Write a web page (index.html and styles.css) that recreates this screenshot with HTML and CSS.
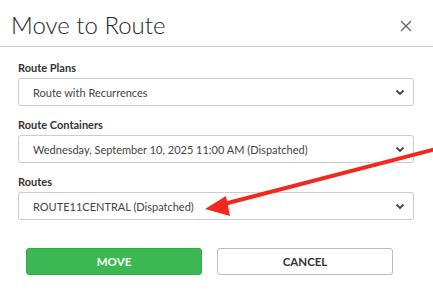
FILE: index.html
```html
<!DOCTYPE html>
<html>
<head>
<meta charset="utf-8">
<link rel="stylesheet" href="styles.css">
</head>
<body>
<div class="modal">
  <div class="header">
    <h1 class="title">Move to Route</h1>
    <span class="close">
      <svg width="12" height="12" viewBox="0 0 12 12"><path d="M1 1L11 11M11 1L1 11" stroke="#666" stroke-width="1.4" fill="none"/></svg>
    </span>
  </div>
  <div class="body">
    <div class="field">
      <label class="label">Route Plans</label>
      <div class="select"><span>Route with Recurrences</span><svg class="chev" width="10" height="7" viewBox="0 0 10 7"><path d="M1.5 1.5L5 5L8.5 1.5" stroke="#444" stroke-width="1.8" fill="none"/></svg></div>
    </div>
    <div class="field">
      <label class="label">Route Containers</label>
      <div class="select"><span>Wednesday, September 10, 2025 11:00 AM (Dispatched)</span><svg class="chev" width="10" height="7" viewBox="0 0 10 7"><path d="M1.5 1.5L5 5L8.5 1.5" stroke="#444" stroke-width="1.8" fill="none"/></svg></div>
    </div>
    <div class="field">
      <label class="label">Routes</label>
      <div class="select"><span>ROUTE11CENTRAL (Dispatched)</span><svg class="chev" width="10" height="7" viewBox="0 0 10 7"><path d="M1.5 1.5L5 5L8.5 1.5" stroke="#444" stroke-width="1.8" fill="none"/></svg></div>
    </div>
    <div class="actions">
      <button class="btn btn-move">MOVE</button>
      <button class="btn btn-cancel">CANCEL</button>
    </div>
  </div>
  <svg class="arrow" width="433" height="292" viewBox="0 0 433 292">
    <path d="M436 149 L224 204" stroke="#f3281d" stroke-width="4" fill="none"/>
    <path d="M205 209 L226 196 L230 216 Z" fill="#f3281d"/>
  </svg>
</div>
</body>
</html>
```

FILE: styles.css
```css
* { box-sizing: border-box; }
html, body { margin: 0; padding: 0; background: #fff; }
body { font-family: Lato, "Open Sans", sans-serif; color: #333; }
.modal { position: relative; width: 433px; height: 292px; overflow: hidden; }
.header {
  height: 47px;
  display: flex;
  align-items: center;
  justify-content: space-between;
  padding: 3px 21px 0 11px;
  border-bottom: 1px solid #cfcfcf;
}
.title { margin: 0; font-size: 24px; font-weight: 300; color: #262626; letter-spacing: 0; }
.close { display: flex; margin-top: 3px; }
.body { padding: 14px 19px 0 18px; }
.field { display: flex; flex-direction: column; margin-bottom: 12px; }
.label { font-size: 11px; font-weight: 700; color: #333; line-height: 14px; margin-bottom: 3px; }
.select {
  height: 28px;
  border: 1px solid #cccccc;
  border-radius: 3px;
  display: flex;
  align-items: center;
  justify-content: space-between;
  padding: 0 8px 0 14px;
  font-size: 11px;
  color: #444;
}
.chev { margin-top: 1px; }
.actions { display: flex; gap: 15px; padding: 16px 0 0 8px; }
.btn {
  width: 176px;
  height: 27px;
  border-radius: 3px;
  font-family: Lato, "Open Sans", sans-serif;
  font-size: 11.5px;
  font-weight: 700;
  cursor: pointer;
}
.btn-move { background: #3cb853; color: #fff; border: 1px solid #36a94b; }
.btn-cancel { background: #fff; color: #333; border: 1px solid #bbbbbb; }
.arrow { position: absolute; left: 0; top: 0; pointer-events: none; }
```
